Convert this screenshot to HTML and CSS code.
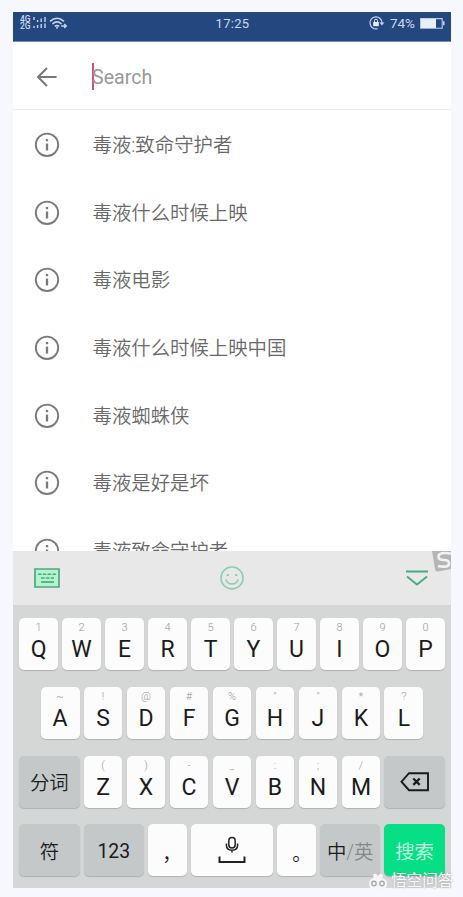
FILE: index.html
```html
<!DOCTYPE html>
<html lang="zh-CN">
<head>
<meta charset="utf-8">
<title>Search</title>
<link rel="stylesheet" href="styles.css">
</head>
<body>
<svg class="defs" width="0" height="0">
  <symbol id="info" viewBox="0 0 26 26"><circle cx="13" cy="12.8" r="11.2" fill="none" stroke="#7a7a7a" stroke-width="1.9"/><path d="M13 11.6v7M13 7v2.2" stroke="#7a7a7a" stroke-width="2.3"/></symbol>
</svg>
<main class="phone">
  <header class="status">
    <div class="signal">
      <div class="nets"><span>4G</span><span>2G</span></div>
      <svg width="13" height="12" viewBox="0 0 13 12" fill="none" stroke="#c5d5ef" stroke-width="1.4"><path d="M1 0v3M1 9v2M4.6 3v2M4.6 8v3M8.2 1.5V5M8.2 7v4M12 0v5M12 6.5V11"/></svg>
      <svg class="wifi" width="19" height="13" viewBox="0 0 19 13" fill="none" stroke="#c5d5ef" stroke-width="1.5"><path d="M1 4.4Q8 -2 15 4.4M3.4 7Q8 2.8 12.6 7M5.8 9.3Q8 7.5 10.2 9.3"/><path d="M8 9.5v2.3M12.2 9h5M15.2 7l2 2-2 2"/></svg>
    </div>
    <time>17:25</time>
    <div class="power">
      <svg width="16" height="14" viewBox="0 0 16 14"><path d="M8.5 12.7A6 6 0 1 1 13 7" fill="none" stroke="#c5d5ef" stroke-width="1.2"/><path d="M10.4 6.6h5L13 9.6z" fill="#c5d5ef"/><path d="M4.2 6h5.6v4.2H4.2z" fill="#e4edfa"/><path d="M5.5 6V4.7a1.5 1.5 0 0 1 3 0V6" fill="none" stroke="#e4edfa"/></svg>
      <span>74%</span>
      <svg width="25" height="11" viewBox="0 0 25 11"><path d="M.6.6h21.6v9.6H.6z" fill="none" stroke="#b9cceb" stroke-width="1.1"/><path d="M1 1h15v9H1z" fill="#e8eef8"/><path d="M23 3.3h1.5v4H23z" fill="#c5d5ef"/></svg>
    </div>
  </header>
  <section class="searchbar">
    <svg width="22" height="22" viewBox="0 0 22 22" fill="none" stroke="#777" stroke-width="2"><path d="M20.5 11H2.5M11 2 2 11l9 9"/></svg>
    <div class="field"><span class="caret"></span><span class="hint">Search</span></div>
  </section>
  <ul class="results">
    <li><svg><use href="#info"/></svg><span>毒液:致命守护者</span></li>
    <li><svg><use href="#info"/></svg><span>毒液什么时候上映</span></li>
    <li><svg><use href="#info"/></svg><span>毒液电影</span></li>
    <li><svg><use href="#info"/></svg><span>毒液什么时候上映中国</span></li>
    <li><svg><use href="#info"/></svg><span>毒液蜘蛛侠</span></li>
    <li><svg><use href="#info"/></svg><span>毒液是好是坏</span></li>
    <li><svg><use href="#info"/></svg><span>毒液致命守护者</span></li>
  </ul>
  <section class="tools">
    <svg width="26" height="20" viewBox="0 0 26 20"><path d="M1 1h24v18H1z" fill="#b5f2d0" stroke="#48aa7e" stroke-width="1.7"/><path d="M4 6.3h18M7 10h13" stroke="#48aa7e" stroke-width="1.6" stroke-dasharray="3.6 1.2"/><path d="M7 14h13" stroke="#48aa7e" stroke-width="1.7"/></svg>
    <svg class="smile" width="24" height="24" viewBox="0 0 24 24" fill="none" stroke="#8fcdb0" stroke-width="1.6"><circle cx="12" cy="12" r="11"/><path d="M5.8 13.5Q7.5 18 12 18t6.2-4.5"/><path d="M6.7 9h2.2M15.1 9h2.2" stroke-width="2"/></svg>
    <svg width="24" height="16" viewBox="0 0 24 16" fill="none" stroke="#48aa7e" stroke-width="1.8"><path d="M1 1.5h22M2 6.5l10 8 10-8"/></svg>
    <svg class="brand" width="19" height="21" viewBox="0 0 19 21"><path d="M0 0h19v18L6 20.5Q3.5 21 3 18z" fill="#b5b5b5"/><path d="M19 2.5Q7 .5 6.5 5.5 6.5 9 12 9t5 4-11 2" fill="none" stroke="#f2f2f2" stroke-width="2.6"/></svg>
  </section>
  <section class="keyboard">
    <div class="row">
      <div class="key"><small>1</small><b>Q</b></div><div class="key"><small>2</small><b>W</b></div><div class="key"><small>3</small><b>E</b></div><div class="key"><small>4</small><b>R</b></div><div class="key"><small>5</small><b>T</b></div><div class="key"><small>6</small><b>Y</b></div><div class="key"><small>7</small><b>U</b></div><div class="key"><small>8</small><b>I</b></div><div class="key"><small>9</small><b>O</b></div><div class="key"><small>0</small><b>P</b></div>
    </div>
    <div class="row">
      <div class="key"><small>~</small><b>A</b></div><div class="key"><small>!</small><b>S</b></div><div class="key"><small>@</small><b>D</b></div><div class="key"><small>#</small><b>F</b></div><div class="key"><small>%</small><b>G</b></div><div class="key"><small>"</small><b>H</b></div><div class="key"><small>"</small><b>J</b></div><div class="key"><small>*</small><b>K</b></div><div class="key"><small>?</small><b>L</b></div>
    </div>
    <div class="row">
      <div class="key gray">分词</div><div class="key"><small>(</small><b>Z</b></div><div class="key"><small>)</small><b>X</b></div><div class="key"><small>-</small><b>C</b></div><div class="key"><small>_</small><b>V</b></div><div class="key"><small>:</small><b>B</b></div><div class="key"><small>;</small><b>N</b></div><div class="key"><small>/</small><b>M</b></div>
      <div class="key gray"><svg width="30" height="20" viewBox="0 0 30 20" fill="none" stroke="#1a1a1a" stroke-width="1.9"><path d="M9 1.2h19v17H9L1.5 9.7z"/><path d="m13.3 6.5 6.4 6.4m0-6.4-6.4 6.4" stroke-width="2.2"/></svg></div>
    </div>
    <div class="row">
      <div class="key gray">符</div><div class="key gray num">123</div><div class="key punct comma">，</div>
      <div class="key space"><svg width="28" height="28" viewBox="0 0 28 28" fill="none" stroke="#222" stroke-width="1.5"><rect x="10.8" y="1.5" width="6.4" height="10.5" rx="3.2"/><path d="M8.4 7.5v1.5q0 5.2 5.6 5.2t5.6-5.2V7.5M14 14.2v2.3"/><path d="M1.5 20.5v5.5h25v-5.5" stroke-width="2"/></svg></div>
      <div class="key punct">。</div><div class="key gray lang">中<i>/英</i></div><div class="key go">搜索</div>
    </div>
  </section>
</main>
<div class="watermark">
  <svg width="20" height="17" viewBox="0 0 20 17"><path d="M6 5Q4 2 6 1t4 2q2-3 4-2t0 4q5 1 5 6t-5 5H6q-5 0-5-5t5-6z" fill="#f6f6f6"/><circle cx="6" cy="10.5" r="2.2" fill="none" stroke="#aaa" stroke-width="1.4"/><circle cx="14" cy="10.5" r="2.2" fill="none" stroke="#aaa" stroke-width="1.4"/></svg>
  <span>悟空问答</span>
</div>
</body>
</html>
```

FILE: styles.css
```css
* { box-sizing: border-box; }
body {
  margin: 0;
  padding: 12px 12px 9px 13px;
  height: 897px;
  overflow: hidden;
  background: #f6f8fe;
  font-family: Roboto, "Noto Sans CJK SC", sans-serif;
}
.defs { position: absolute; }
.phone {
  width: 438px;
  height: 876px;
  display: flex;
  flex-direction: column;
  background: #fff;
}
.status {
  flex: none;
  height: 30px;
  padding: 0 6px 7px 7px;
  display: grid;
  grid-template-columns: 1fr auto 1fr;
  align-items: center;
  background: #24477f;
  border-bottom: 1px solid #6d8dbb;
  color: #c9daf3;
  font-size: 13px;
}
.status time { letter-spacing: .3px; }
.signal, .power { display: flex; align-items: center; }
.nets { display: grid; width: 13px; font-size: 8.5px; line-height: 7px; font-weight: 500; }
.wifi { margin-left: 3px; }
.power { justify-content: flex-end; gap: 5px; }
.power span { font-size: 13.5px; }
.searchbar {
  flex: none;
  height: 68px;
  padding: 2px 0 0 23px;
  display: flex;
  align-items: center;
  border-bottom: 1px solid #e9ebee;
}
.field {
  margin-left: 34px;
  display: flex;
  align-items: center;
  color: #999;
  font-size: 19.6px;
}
.hint { padding-top: 2px; }
.caret { width: 2px; height: 27px; margin-right: -2px; background: #cf5277; }
.results {
  height: 441px;
  margin: 0;
  padding: 1px 0 0;
  list-style: none;
  overflow: hidden;
}
.results li {
  height: 67.7px;
  padding-left: 21px;
  display: flex;
  align-items: center;
  gap: 32.5px;
  color: #686868;
  font-size: 19.4px;
  font-weight: 350;
  line-height: 28px;
}
.results span { padding-top: 2px; }
.results svg { width: 26px; height: 26px; flex: none; }
.tools {
  position: relative;
  flex: none;
  height: 54px;
  padding: 0 22px 0 21px;
  display: flex;
  align-items: center;
  justify-content: space-between;
  background: #e8e8e8;
}
.smile { margin-right: 2px; }
.brand { position: absolute; top: 0; right: 0; }
.keyboard {
  flex: 1;
  padding: 13.4px 6px 11.6px;
  display: flex;
  flex-direction: column;
  justify-content: space-between;
  background: #d5d6d6;
}
.row { display: flex; justify-content: center; gap: 4.1px; }
.key {
  width: 38.9px;
  height: 52px;
  display: flex;
  flex-direction: column;
  align-items: center;
  justify-content: center;
  border-radius: 5px;
  background: #fcfcfc;
  box-shadow: 0 1px 1px #b0b1b2;
  color: #1b1b1b;
  font-size: 19.4px;
  font-weight: 350;
}
.key small { height: 16px; color: #999; font-size: 11px; line-height: 14px; }
.key b { height: 30px; font-size: 23px; line-height: 25px; font-weight: 400; }
.gray { width: 60.3px; background: #c5c8c9; }
.num { padding-top: 3px; font-weight: 400; }
.space { width: 81.9px; }
.punct { padding: 4px 0 0 11px; font-family: "Noto Sans CJK SC", sans-serif; }
.comma { padding-left: 9px; }
.lang { flex-direction: row; }
.lang i { color: #85888a; font-style: normal; }
.go { width: 60.3px; background: #07df87; color: #c9ffe3; }
.watermark {
  position: absolute;
  left: 368px;
  top: 871px;
  display: flex;
  align-items: center;
  gap: 3px;
  color: #fafafa;
  font-size: 15.6px;
  line-height: 20px;
  text-shadow: 0 0 2px #999;
}
```
